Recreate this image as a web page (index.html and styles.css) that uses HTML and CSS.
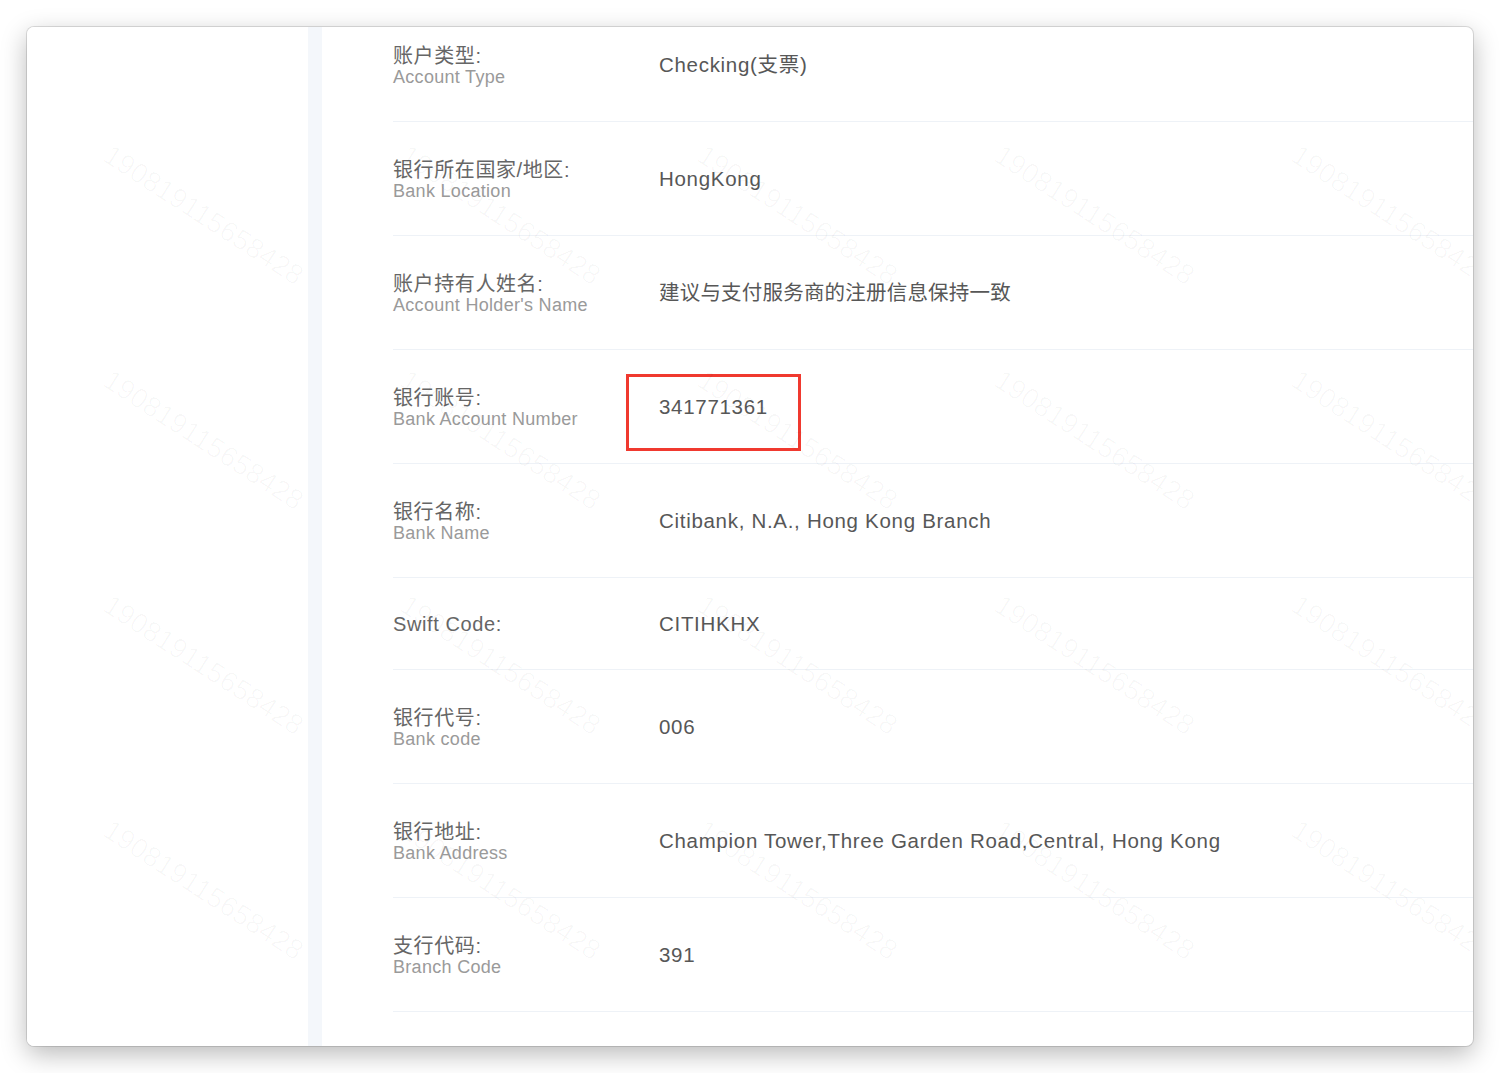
FILE: index.html
```html
<!DOCTYPE html>
<html lang="zh-CN">
<head>
<meta charset="utf-8">
<title>Bank Details</title>
<link rel="stylesheet" href="styles.css">
</head>
<body>
<div class="window">
  <aside class="sidebar"></aside>
  <div class="strip"></div>
  <main class="content">
    <div class="list">
      <div class="row">
        <div class="label"><div class="zh">账户类型:</div><div class="en">Account Type</div></div>
        <div class="value">Checking(支票)</div>
      </div>
      <div class="row">
        <div class="label"><div class="zh">银行所在国家/地区:</div><div class="en">Bank Location</div></div>
        <div class="value">HongKong</div>
      </div>
      <div class="row">
        <div class="label"><div class="zh">账户持有人姓名:</div><div class="en">Account Holder's Name</div></div>
        <div class="value value-cjk">建议与支付服务商的注册信息保持一致</div>
      </div>
      <div class="row">
        <div class="label"><div class="zh">银行账号:</div><div class="en">Bank Account Number</div></div>
        <div class="value">341771361<span class="highlight"></span></div>
      </div>
      <div class="row">
        <div class="label"><div class="zh">银行名称:</div><div class="en">Bank Name</div></div>
        <div class="value">Citibank, N.A., Hong Kong Branch</div>
      </div>
      <div class="row row-short">
        <div class="label"><div class="zh">Swift Code:</div></div>
        <div class="value">CITIHKHX</div>
      </div>
      <div class="row">
        <div class="label"><div class="zh">银行代号:</div><div class="en">Bank code</div></div>
        <div class="value">006</div>
      </div>
      <div class="row">
        <div class="label"><div class="zh">银行地址:</div><div class="en">Bank Address</div></div>
        <div class="value">Champion Tower,Three Garden Road,Central, Hong Kong</div>
      </div>
      <div class="row">
        <div class="label"><div class="zh">支行代码:</div><div class="en">Branch Code</div></div>
        <div class="value">391</div>
      </div>
      <div class="row"></div>
    </div>
  </main>
  <div class="watermark">
    <span>190819115658428</span><span>190819115658428</span><span>190819115658428</span><span>190819115658428</span><span>190819115658428</span>
    <span>190819115658428</span><span>190819115658428</span><span>190819115658428</span><span>190819115658428</span><span>190819115658428</span>
    <span>190819115658428</span><span>190819115658428</span><span>190819115658428</span><span>190819115658428</span><span>190819115658428</span>
    <span>190819115658428</span><span>190819115658428</span><span>190819115658428</span><span>190819115658428</span><span>190819115658428</span>
  </div>
</div>
</body>
</html>
```
FILE: styles.css
```css
html, body {
  margin: 0;
  padding: 0;
  background: #ffffff;
}
body {
  font-family: "Liberation Sans", "Noto Sans CJK SC", sans-serif;
  padding: 27px;
  width: 1500px;
  height: 1073px;
  box-sizing: border-box;
  overflow: hidden;
}
.window {
  position: relative;
  width: 1446px;
  height: 1019px;
  background: #ffffff;
  border-radius: 7px;
  overflow: hidden;
  display: flex;
  box-shadow: 0 0 0 1px rgba(0,0,0,0.12), 0 8px 26px rgba(0,0,0,0.28);
}
.sidebar {
  width: 281px;
  flex: none;
  background: #ffffff;
}
.strip {
  width: 14px;
  flex: none;
  background: #f4f7fb;
}
.content {
  flex: 1;
  padding-left: 71px;
  overflow: hidden;
}
.list {
  margin-top: -19px;
}
.row {
  height: 113px;
  border-bottom: 1px solid #eef2f7;
  display: grid;
  grid-template-columns: 266px 1fr;
  align-items: center;
}
.row-short {
  height: 91px;
}
.label {
  padding-top: 4px;
}
.label .zh {
  font-size: 20px;
  line-height: 22px;
  color: #666666;
  letter-spacing: 0.6px;
}
.label .en {
  font-size: 18px;
  line-height: 21px;
  color: #9a9a9a;
  letter-spacing: 0.3px;
}
.row-short .label {
  padding-top: 0;
}
.value {
  position: relative;
  font-size: 20.5px;
  line-height: 24px;
  color: #575757;
  letter-spacing: 0.7px;
}
.value-cjk {
  letter-spacing: 0.2px;
}
.highlight {
  position: absolute;
  left: -33px;
  top: -21px;
  width: 175px;
  height: 77px;
  border: 3px solid #f0392f;
  box-sizing: border-box;
}
.watermark {
  position: absolute;
  inset: 0;
  pointer-events: none;
  display: grid;
  grid-template-columns: repeat(5, 297px);
  grid-auto-rows: 225px;
  padding-left: 88px;
  padding-top: 112px;
}
.watermark span {
  display: block;
  width: 250px;
  font-size: 28px;
  color: rgba(0,0,0,0.028);
  transform: rotate(33deg);
  transform-origin: left top;
  white-space: nowrap;
}
```
